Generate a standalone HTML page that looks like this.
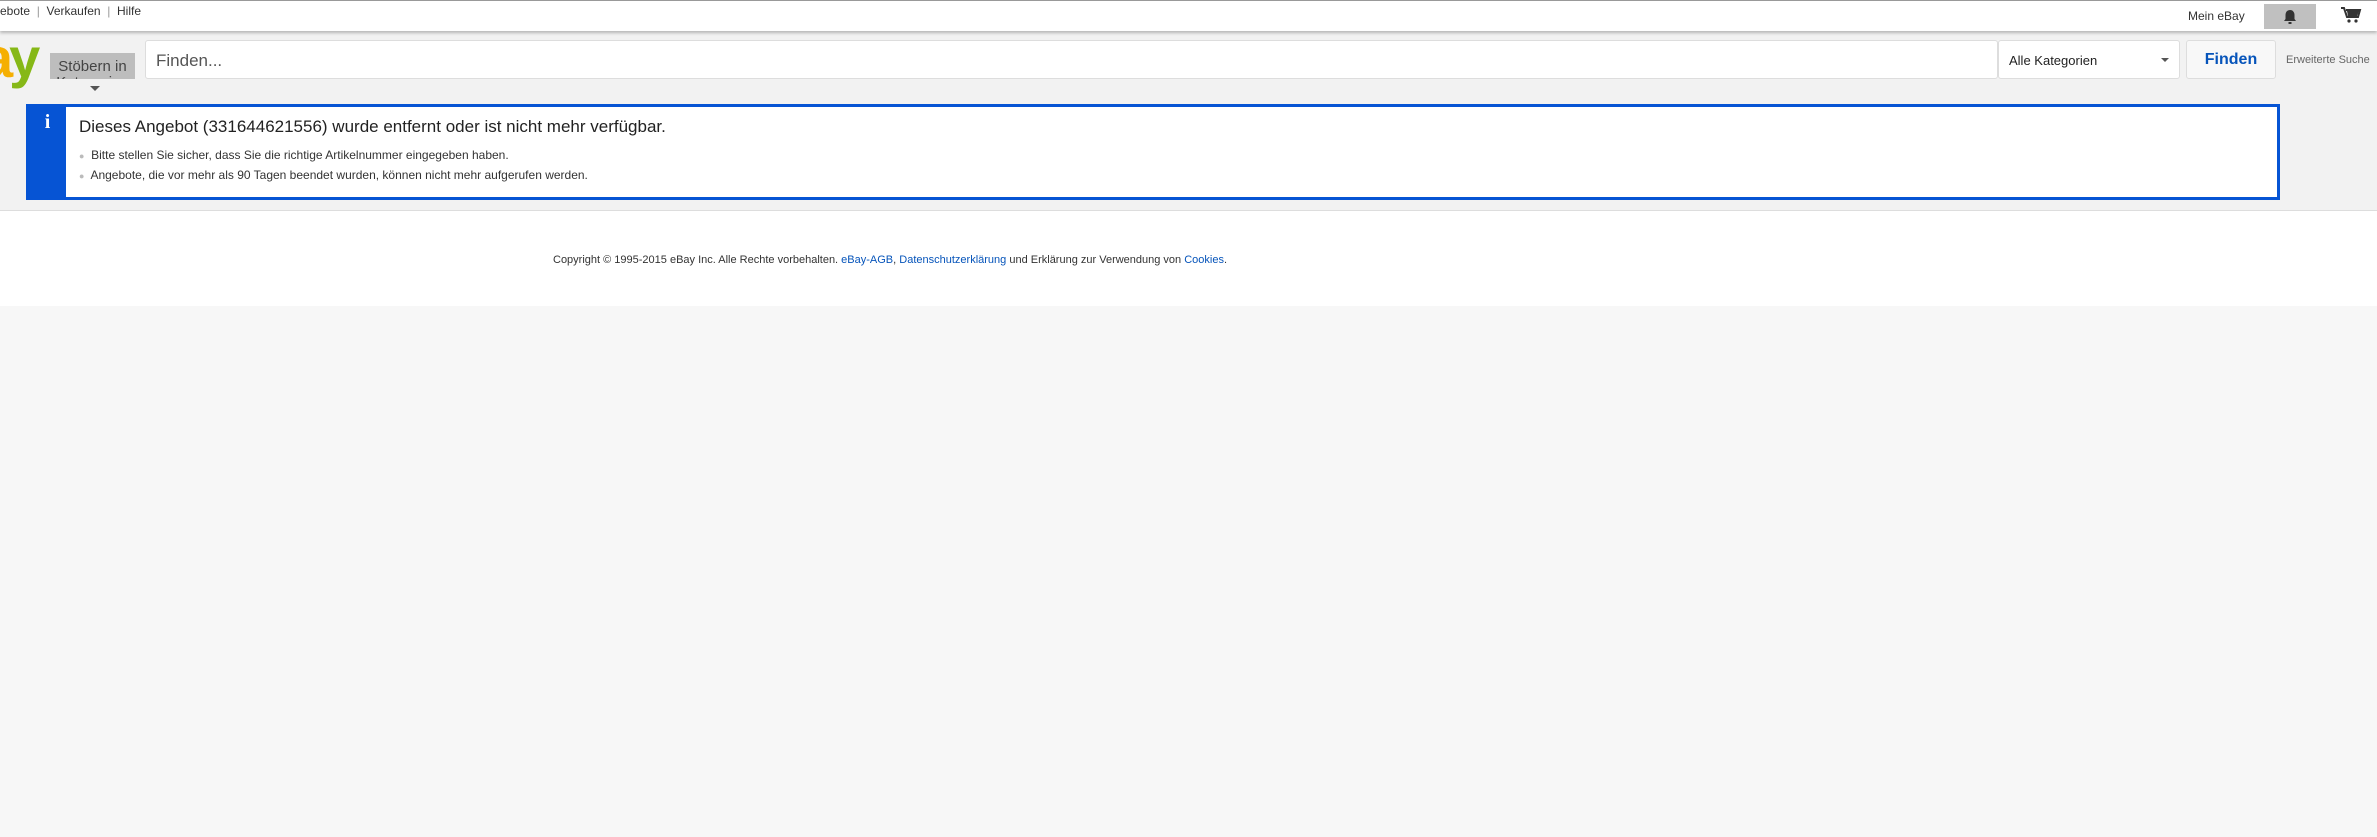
<!DOCTYPE html>
<html><head><meta charset="utf-8"><style>
body{margin:0;width:2377px;height:837px;background:#f7f7f7;font-family:"Liberation Sans",sans-serif;position:relative;overflow:hidden;color:#333}
.a{position:absolute}
#top{left:0;top:0;width:2377px;height:30px;background:#fff;border-top:1px solid #999;box-shadow:0 2px 3px rgba(0,0,0,.25);z-index:2}
#hdr{left:0;top:31px;width:2377px;height:179px;background:#f2f2f2}
#foot{left:0;top:210px;width:2377px;height:95px;background:#fff;border-top:1px solid #ddd}
a{color:#0654ba}
</style></head><body>
<div id="top" class="a">
 <div class="a" style="left:0;top:3px;font-size:12px;color:#333">ebote &nbsp;<span style="color:#999">|</span>&nbsp; Verkaufen &nbsp;<span style="color:#999">|</span>&nbsp; Hilfe</div>
 <div class="a" style="left:2188px;top:8px;font-size:12px">Mein eBay</div>
 <div class="a" style="left:2264px;top:3px;width:52px;height:25px;background:#c0c0c0">
  <svg class="a" style="left:18px;top:5px" width="16" height="16" viewBox="0 0 16 16"><path d="M8 1c-3 0-4.5 2.5-4.5 5v4L2 12h12l-1.5-2V6C12.5 3.5 11 1 8 1z" fill="#333"/><rect x="6.5" y="13" width="3" height="2" fill="#333"/></svg>
 </div>
 <svg class="a" style="left:2340px;top:5px" width="22" height="18" viewBox="0 0 22 18"><path d="M1 2h3l3 9h11l2-7H6" fill="none" stroke="#333" stroke-width="2"/><path d="M7 5h12l-2 5H8z" fill="#333"/><circle cx="9" cy="15" r="1.6" fill="#333"/><circle cx="16" cy="15" r="1.6" fill="#333"/></svg>
</div>
<div id="hdr" class="a"></div>
<div class="a" style="left:-18px;top:30px;font-size:56px;font-weight:bold;letter-spacing:-4px;line-height:56px"><span style="color:#f5af02">a</span><span style="color:#86b817">y</span></div>
<div class="a" style="left:50px;top:53px;width:85px;height:26px;background:#bdbdbd;overflow:hidden;text-align:center;font-size:15px;color:#444;line-height:16px;padding-top:6px;box-sizing:border-box">Stöbern in<br>Kategorien</div>
<div class="a" style="left:90px;top:86px;border-left:5px solid transparent;border-right:5px solid transparent;border-top:5px solid #555"></div>
<div class="a" style="left:145px;top:40px;width:1853px;height:39px;background:#fff;border:1px solid #ddd;border-radius:3px;box-sizing:border-box"></div>
<div class="a" style="left:156px;top:51px;font-size:17px;color:#555">Finden...</div>
<div class="a" style="left:1998px;top:40px;width:182px;height:39px;background:#fff;border:1px solid #ddd;border-radius:3px;box-sizing:border-box"></div>
<div class="a" style="left:2009px;top:53px;font-size:13px;color:#222">Alle Kategorien</div>
<div class="a" style="left:2161px;top:58px;border-left:4px solid transparent;border-right:4px solid transparent;border-top:4px solid #555"></div>
<div class="a" style="left:2186px;top:40px;width:90px;height:39px;background:#f8f8f8;border:1px solid #ddd;border-radius:3px;box-sizing:border-box;text-align:center;line-height:37px;font-size:16px;font-weight:bold;color:#0654ba">Finden</div>
<div class="a" style="left:2286px;top:54px;font-size:11px;color:#666">Erweiterte Suche</div>
<div class="a" style="left:26px;top:104px;width:2254px;height:96px;border:3px solid #0654d4;background:#fff;box-sizing:border-box">
 <div class="a" style="left:0;top:0;width:37px;height:90px;background:#0654d4;color:#fff;font-weight:bold;font-size:20px;text-align:center;line-height:26px;padding-top:2px;font-family:'Liberation Serif',serif">i</div>
 <div class="a" style="left:50px;top:10px;font-size:17px;color:#222">Dieses Angebot (331644621556) wurde entfernt oder ist nicht mehr verfügbar.</div>
 <div class="a" style="left:50px;top:39px;font-size:12px;color:#333;line-height:19px"><span style="color:#bbb;font-size:9px">●</span>&nbsp; Bitte stellen Sie sicher, dass Sie die richtige Artikelnummer eingegeben haben.<br><span style="color:#bbb;font-size:9px">●</span>&nbsp; Angebote, die vor mehr als 90 Tagen beendet wurden, können nicht mehr aufgerufen werden.</div>
</div>
<div id="foot" class="a"><div class="a" style="left:553px;top:43px;font-size:11px;color:#333">Copyright © 1995-2015 eBay Inc. Alle Rechte vorbehalten. <a>eBay-AGB</a>, <a>Datenschutzerklärung</a> und Erklärung zur Verwendung von <a>Cookies</a>.</div></div>
</body></html>
